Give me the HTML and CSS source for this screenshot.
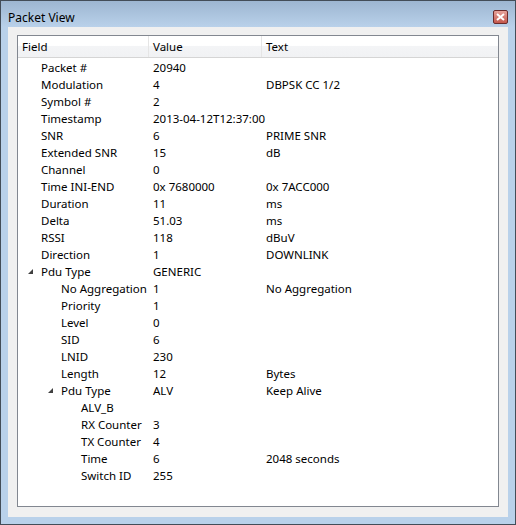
FILE: index.html
```html
<!DOCTYPE html>
<html>
<head>
<meta charset="utf-8">
<link rel="stylesheet" href="styles.css">
</head>
<body>
<div class="window">
  <div class="titlebar">
    <span class="title">Packet View</span>
    <span class="close"><svg width="9" height="8" viewBox="0 0 9 8"><path d="M1 1 L8 7 M8 1 L1 7" stroke="#fff" stroke-width="2"/></svg></span>
  </div>
  <div class="client">
    <div class="tree">
      <div class="header">
        <div class="hcell c1">Field</div>
        <div class="hcell c2">Value</div>
        <div class="hcell c3">Text</div>
      </div>
      <div class="rows">
        <div class="row l1"><span class="c1"><span class="f">Packet #</span></span><span class="c2">20940</span><span class="c3"></span></div>
        <div class="row l1"><span class="c1"><span class="f">Modulation</span></span><span class="c2">4</span><span class="c3">DBPSK CC 1/2</span></div>
        <div class="row l1"><span class="c1"><span class="f">Symbol #</span></span><span class="c2">2</span><span class="c3"></span></div>
        <div class="row l1"><span class="c1"><span class="f">Timestamp</span></span><span class="c2">2013-04-12T12:37:00</span><span class="c3"></span></div>
        <div class="row l1"><span class="c1"><span class="f">SNR</span></span><span class="c2">6</span><span class="c3">PRIME SNR</span></div>
        <div class="row l1"><span class="c1"><span class="f">Extended SNR</span></span><span class="c2">15</span><span class="c3">dB</span></div>
        <div class="row l1"><span class="c1"><span class="f">Channel</span></span><span class="c2">0</span><span class="c3"></span></div>
        <div class="row l1"><span class="c1"><span class="f">Time INI-END</span></span><span class="c2">0x 7680000</span><span class="c3">0x 7ACC000</span></div>
        <div class="row l1"><span class="c1"><span class="f">Duration</span></span><span class="c2">11</span><span class="c3">ms</span></div>
        <div class="row l1"><span class="c1"><span class="f">Delta</span></span><span class="c2">51.03</span><span class="c3">ms</span></div>
        <div class="row l1"><span class="c1"><span class="f">RSSI</span></span><span class="c2">118</span><span class="c3">dBuV</span></div>
        <div class="row l1"><span class="c1"><span class="f">Direction</span></span><span class="c2">1</span><span class="c3">DOWNLINK</span></div>
        <div class="row l1"><span class="c1"><span class="arrow"></span><span class="f">Pdu Type</span></span><span class="c2">GENERIC</span><span class="c3"></span></div>
        <div class="row l2"><span class="c1"><span class="f">No Aggregation</span></span><span class="c2">1</span><span class="c3">No Aggregation</span></div>
        <div class="row l2"><span class="c1"><span class="f">Priority</span></span><span class="c2">1</span><span class="c3"></span></div>
        <div class="row l2"><span class="c1"><span class="f">Level</span></span><span class="c2">0</span><span class="c3"></span></div>
        <div class="row l2"><span class="c1"><span class="f">SID</span></span><span class="c2">6</span><span class="c3"></span></div>
        <div class="row l2"><span class="c1"><span class="f">LNID</span></span><span class="c2">230</span><span class="c3"></span></div>
        <div class="row l2"><span class="c1"><span class="f">Length</span></span><span class="c2">12</span><span class="c3">Bytes</span></div>
        <div class="row l2"><span class="c1"><span class="arrow"></span><span class="f">Pdu Type</span></span><span class="c2">ALV</span><span class="c3">Keep Alive</span></div>
        <div class="row l3"><span class="c1"><span class="f">ALV_B</span></span><span class="c2"></span><span class="c3"></span></div>
        <div class="row l3"><span class="c1"><span class="f">RX Counter</span></span><span class="c2">3</span><span class="c3"></span></div>
        <div class="row l3"><span class="c1"><span class="f">TX Counter</span></span><span class="c2">4</span><span class="c3"></span></div>
        <div class="row l3"><span class="c1"><span class="f">Time</span></span><span class="c2">6</span><span class="c3">2048 seconds</span></div>
        <div class="row l3"><span class="c1"><span class="f">Switch ID</span></span><span class="c2">255</span><span class="c3"></span></div>
      </div>
    </div>
  </div>
</div>
</body>
</html>
```

FILE: styles.css
```css
html, body {
  margin: 0;
  padding: 0;
  background: #fff;
}
.window {
  width: 514px;
  height: 523px;
  border: 1px solid #434d58;
  background: #b9d1ea;
  display: flex;
  flex-direction: column;
  font-family: "Noto Sans", "DejaVu Sans", sans-serif;
  font-size: 11.5px;
  color: #000;
}
.titlebar {
  height: 20px;
  flex: none;
  background: linear-gradient(#9db6d1, #b9d1ea);
  display: flex;
  align-items: center;
  justify-content: space-between;
  padding: 6px 7px 0 7px;
}
.title {
  font-size: 12px;
  color: #000;
}
.close {
  width: 13px;
  height: 12px;
  border: 1px solid #6a2b2b;
  border-radius: 2px;
  background: linear-gradient(#e6a39b, #c4574c);
  display: flex;
  align-items: center;
  justify-content: center;
}
.client {
  flex: 1;
  margin: 0 7px 7px 7px;
  background: #f0f0f0;
  padding: 8px 9px 10px 9px;
  display: flex;
}
.tree {
  flex: 1;
  border: 1px solid #828790;
  background: #fff;
  display: flex;
  flex-direction: column;
}
.header {
  height: 21px;
  display: flex;
  background: linear-gradient(#ffffff 0%, #ffffff 45%, #f3f4f6 50%, #f1f2f4 100%);
  border-bottom: 1px solid #d5d5d5;
}
.hcell {
  height: 21px;
  line-height: 21px;
  padding-left: 4px;
  box-sizing: border-box;
  border-right: 1px solid #e5e5e5;
}
.c1 { width: 131px; flex: none; display: flex; align-items: center; }
.c2 { width: 113px; flex: none; }
.c3 { flex: 1; border-right: none; }
.rows {
  padding-top: 1px;
}
.row {
  height: 17px;
  line-height: 17px;
  display: flex;
  white-space: nowrap;
}
.row .c2 { padding-left: 4px; box-sizing: border-box; }
.row .c3 { padding-left: 4px; }
.row .c1 { position: relative; }
.l1 .c1 { padding-left: 23px; box-sizing: border-box; }
.l2 .c1 { padding-left: 43px; box-sizing: border-box; }
.l3 .c1 { padding-left: 63px; box-sizing: border-box; }
.arrow {
  position: absolute;
  width: 0;
  height: 0;
  border-left: 5px solid transparent;
  border-bottom: 5px solid #404040;
  top: 6px;
}
.l1 .arrow { left: 10px; }
.l2 .arrow { left: 30px; }
```
